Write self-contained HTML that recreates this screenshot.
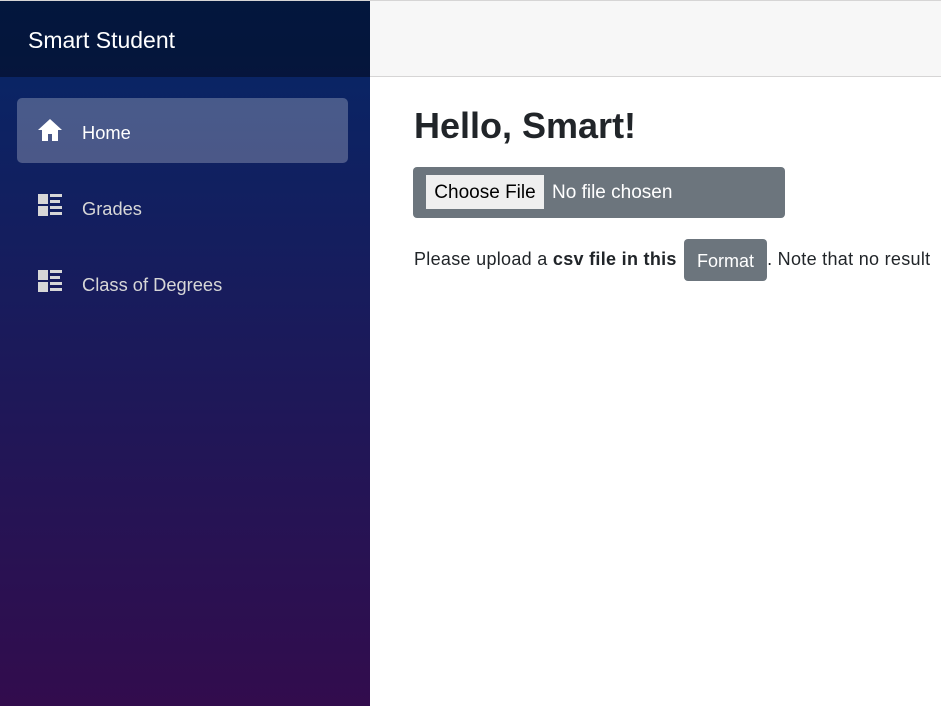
<!DOCTYPE html>
<html><head><style>
*{box-sizing:border-box;margin:0;padding:0}
body{width:941px;height:706px;overflow:hidden;font-family:"Segoe UI","Liberation Sans",sans-serif;color:#212529;position:relative;background:#fff}
.side{position:absolute;left:0;top:0;width:370px;height:706px;background:linear-gradient(180deg,#052767 0%,#320c4d 100%)}
.brand{height:77px;background:rgba(0,0,0,0.4);color:#fff;font-size:23px;padding:26px 0 0 28px;border-top:1px solid #d6d5d5}
.nav{position:absolute;left:17px;width:331px;height:65px;border-radius:5px;color:#d7d7d7;font-size:18.3px;line-height:69px;padding-left:65px}
.nav.act{background:rgba(255,255,255,0.25);color:#fff}
.nav svg{position:absolute;left:20px;top:20px}
.top{position:absolute;left:370px;top:0;right:0;height:77px;background:#f7f7f7;border-bottom:1px solid #d6d5d5;border-top:1px solid #d6d5d5}
h1{position:absolute;left:414px;top:104px;font-size:36px;font-weight:600;line-height:43px}
.file{position:absolute;left:413px;top:167px;width:372px;height:51px;background:#6c757d;border-radius:4px}
.file .b{position:absolute;left:13px;top:8px;width:118px;height:34px;background:#efefef;color:#000;font-size:19px;text-align:center;line-height:36px}
.file .t{position:absolute;left:139px;top:8px;color:#fff;font-size:19px;line-height:36px}
p{position:absolute;left:414px;top:239px;width:527px;overflow:hidden;font-size:18px;letter-spacing:0.3px;line-height:40px;white-space:nowrap}
.fmt{display:inline-block;background:#6c757d;color:#fff;border-radius:4px;height:42px;width:83px;text-align:center;line-height:44px;vertical-align:top;margin-left:2px;letter-spacing:0}
</style></head><body>
<div class="side">
<div class="brand">Smart Student</div>
<div class="nav act" style="top:98px"><svg width="26" height="24" viewBox="0 0 26 24"><path d="M13 1L1 12h4v11h6v-7h4v7h6V12h4z" fill="#fff"/></svg>Home</div>
<div class="nav" style="top:174px"><svg width="26" height="24" viewBox="0 0 26 24"><g fill="#d7d7d7"><rect x="1" y="0" width="10" height="10"/><rect x="1" y="12" width="10" height="10"/><rect x="13" y="0" width="12" height="3"/><rect x="13" y="6" width="10" height="3"/><rect x="13" y="12" width="12" height="3"/><rect x="13" y="18" width="12" height="3"/></g></svg>Grades</div>
<div class="nav" style="top:250px"><svg width="26" height="24" viewBox="0 0 26 24"><g fill="#d7d7d7"><rect x="1" y="0" width="10" height="10"/><rect x="1" y="12" width="10" height="10"/><rect x="13" y="0" width="12" height="3"/><rect x="13" y="6" width="10" height="3"/><rect x="13" y="12" width="12" height="3"/><rect x="13" y="18" width="12" height="3"/></g></svg>Class of Degrees</div>
</div>
<div class="top"></div>
<h1>Hello, Smart!</h1>
<div class="file"><div class="b">Choose File</div><div class="t">No file chosen</div></div>
<p>Please upload a <b>csv file in this</b> <span class="fmt">Format</span>. Note that no result</p>
</body></html>
